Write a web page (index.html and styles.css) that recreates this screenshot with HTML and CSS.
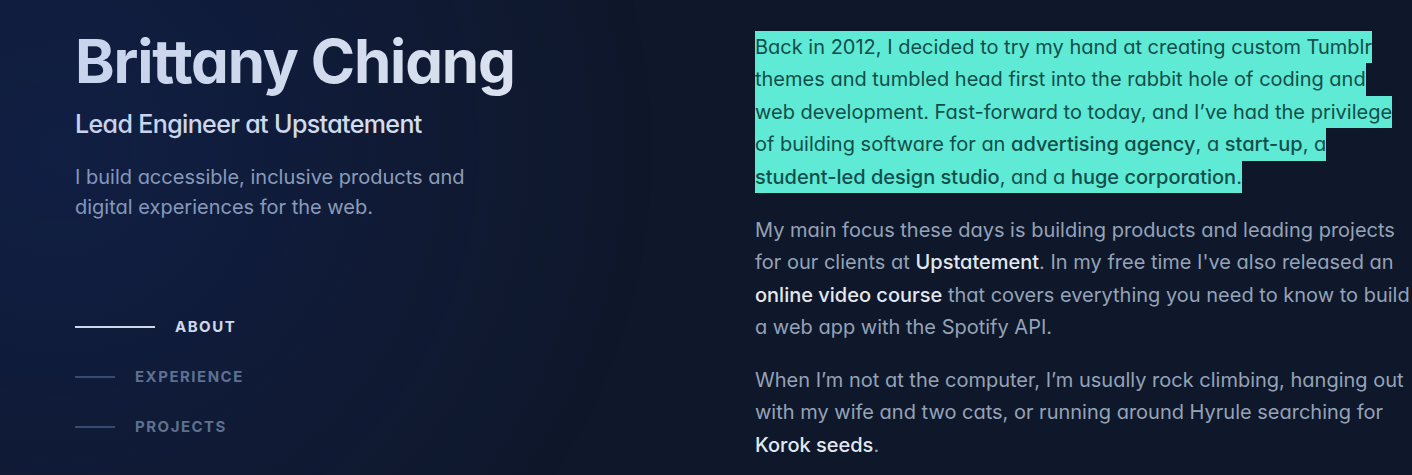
FILE: index.html
```html
<!DOCTYPE html>
<html lang="en">
<head>
<meta charset="utf-8">
<title>Brittany Chiang</title>
<link rel="stylesheet" href="styles.css">
</head>
<body>
<div class="spotlight"></div>
<div class="page">
  <header class="intro">
    <h1 class="name">Brittany Chiang</h1>
    <h2 class="role">Lead Engineer at Upstatement</h2>
    <p class="tagline">I build accessible, inclusive products and digital experiences for the web.</p>
    <nav class="nav">
      <ul class="nav-list">
        <li><a class="nav-link active" href="#about"><span class="nav-indicator"></span><span class="nav-text">About</span></a></li>
        <li><a class="nav-link" href="#experience"><span class="nav-indicator"></span><span class="nav-text">Experience</span></a></li>
        <li><a class="nav-link" href="#projects"><span class="nav-indicator"></span><span class="nav-text">Projects</span></a></li>
      </ul>
    </nav>
  </header>
  <main class="about">
    <p class="para"><span class="selected">Back in 2012, I decided to try my hand at creating custom Tumblr themes and tumbled head first into the rabbit hole of coding and web development. Fast-forward to today, and I’ve had the privilege of building software for an <b class="em">advertising agency</b>, a <b class="em">start-up</b>, a <b class="em">student-led design studio</b>, and a <b class="em">huge corporation</b>.</span></p>
    <p class="para">My main focus these days is building products and leading projects for our clients at <b class="em">Upstatement</b>. In my free time I've also released an <b class="em">online video course</b> that covers everything you need to know to build a web app with the Spotify API.</p>
    <p class="para">When I’m not at the computer, I’m usually rock climbing, hanging out with my wife and two cats, or running around Hyrule searching for <b class="em">Korok seeds</b>.</p>
  </main>
</div>
</body>
</html>
```
FILE: styles.css
```css
html, body {
  margin: 0;
  padding: 0;
}
body {
  background: #0f172a;
  color: #94a3b8;
  font-family: Inter, "Noto Sans", sans-serif;
  font-feature-settings: "cv11";
  height: 475px;
  overflow: hidden;
}
.spotlight {
  position: fixed;
  inset: 0;
  pointer-events: none;
  z-index: 30;
  background: radial-gradient(750px circle at 60px 150px, rgba(29, 78, 216, 0.15), transparent 80%);
}
.page {
  display: flex;
  gap: 20px;
  padding-left: 75px;
}
.intro {
  width: 660px;
  flex: none;
  padding-top: 31px;
}
.name {
  margin: 0;
  font-size: 60px;
  line-height: 60px;
  font-weight: 700;
  letter-spacing: -1.2px;
  color: #e2e8f0;
}
.role {
  margin: 16px 0 0;
  font-size: 25px;
  line-height: 35px;
  font-weight: 500;
  letter-spacing: -0.625px;
  color: #e2e8f0;
}
.tagline {
  margin: 20px 0 0;
  max-width: 400px;
  font-size: 20px;
  line-height: 30px;
}
.nav-list {
  list-style: none;
  margin: 80px 0 0;
  padding: 0;
  width: max-content;
}
.nav-link {
  display: flex;
  align-items: center;
  padding: 15px 0;
  text-decoration: none;
}
.nav-indicator {
  display: block;
  width: 40px;
  height: 2px;
  margin-right: 20px;
  background: #3b4a66;
}
.nav-text {
  font-size: 15px;
  line-height: 20px;
  font-weight: 700;
  text-transform: uppercase;
  letter-spacing: 1.5px;
  color: #64748b;
}
.nav-link.active .nav-indicator {
  width: 80px;
  background: #e2e8f0;
}
.nav-link.active .nav-text {
  color: #e2e8f0;
}
.about {
  width: 655.5px;
  flex: none;
  padding-top: 31px;
}
.para {
  margin: 0 0 20px;
  font-size: 20px;
  line-height: 32.5px;
}
.em {
  font-weight: 500;
  color: #e2e8f0;
}
.selected {
  background: #5eead4;
  color: #134e4a;
  padding: 4.15px 0;
}
.selected .em {
  color: #134e4a;
}
```
